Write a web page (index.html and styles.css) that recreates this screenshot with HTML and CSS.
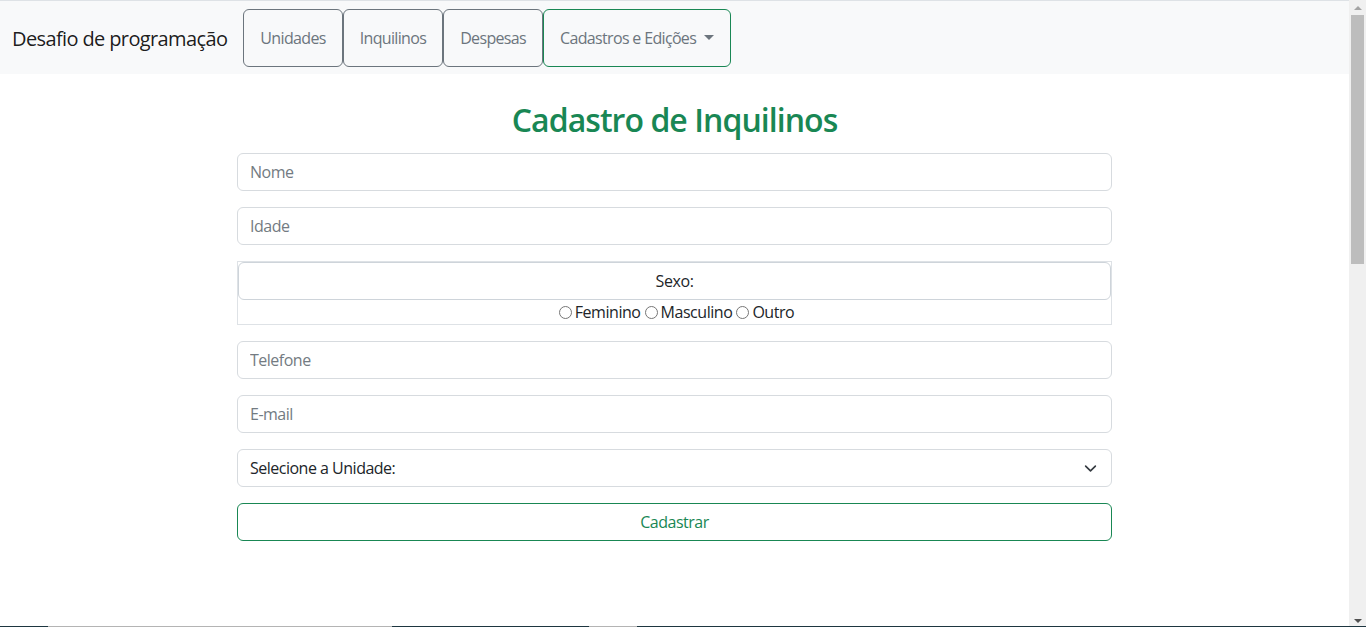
FILE: index.html
```html
<!DOCTYPE html>
<html lang="pt-BR">
<head>
<meta charset="utf-8">
<title>Cadastro de Inquilinos</title>
<link rel="stylesheet" href="styles.css">
</head>
<body>
<div class="page">
  <nav class="navbar">
    <span class="brand">Desafio de programação</span>
    <div class="nav-buttons">
      <button class="nav-btn">Unidades</button>
      <button class="nav-btn">Inquilinos</button>
      <button class="nav-btn">Despesas</button>
      <button class="nav-btn nav-btn-success">Cadastros e Edições<span class="caret"></span></button>
    </div>
  </nav>
  <main class="main">
    <h2 class="title">Cadastro de Inquilinos</h2>
    <form class="form">
      <input class="field" type="text" placeholder="Nome">
      <input class="field" type="text" placeholder="Idade">
      <div class="sexo-box">
        <div class="sexo-label">Sexo:</div>
        <div class="radios">
          <label class="radio"><span class="radio-circle"></span>Feminino</label>
          <label class="radio"><span class="radio-circle"></span>Masculino</label>
          <label class="radio"><span class="radio-circle"></span>Outro</label>
        </div>
      </div>
      <input class="field" type="text" placeholder="Telefone">
      <input class="field" type="text" placeholder="E-mail">
      <div class="field select">
        <span>Selecione a Unidade:</span>
        <svg class="chevron" width="13" height="13" viewBox="0 0 16 16"><path d="M2 5l6 6 6-6" fill="none" stroke="#343a40" stroke-width="2" stroke-linecap="round" stroke-linejoin="round"/></svg>
      </div>
      <button type="button" class="submit">Cadastrar</button>
    </form>
  </main>
</div>
<div class="scrollbar">
  <div class="sb-btn"><span class="arrow-up"></span></div>
  <div class="sb-thumb"></div>
  <div class="sb-track"></div>
  <div class="sb-btn"><span class="arrow-down"></span></div>
</div>
<div class="bottom-strip">
  <span class="seg dark s1"></span>
  <span class="seg grey s2"></span>
  <span class="seg dark s3"></span>
  <span class="seg grey s4"></span>
  <span class="seg dark s5"></span>
</div>
</body>
</html>
```
FILE: styles.css
```css
* { box-sizing: border-box; }
html, body { margin: 0; padding: 0; }
body {
  font-family: "Segoe UI", "Open Sans", "Noto Sans", sans-serif;
  font-size: 16px;
  line-height: 1.5;
  color: #212529;
  background: #fff;
  display: flex;
  height: 627px;
  overflow: hidden;
}
.page {
  flex: 1;
  min-width: 0;
  border-top: 1px solid #dee2e6;
}
.navbar {
  display: flex;
  align-items: center;
  background: #f8f9fa;
  padding: 0 12px;
  height: 73px;
}
.brand {
  font-size: 20px;
  color: rgba(0,0,0,.9);
  margin-right: 16px;
  padding-top: 3px;
  letter-spacing: -0.62px;
}
.nav-buttons { display: flex; }
.nav-btn {
  font-family: inherit;
  font-size: 16px;
  line-height: 23px;
  padding: 17px 16px 16px;
  background: transparent;
  color: #6c757d;
  border: 1px solid #6c757d;
  border-radius: 6px;
  letter-spacing: -0.66px;
  display: flex;
  align-items: center;
}
.nav-btn-success { border-color: #198754; }
.caret {
  display: inline-block;
  margin-left: 8px;
  width: 0; height: 0;
  border-top: 5px solid #6c757d;
  border-left: 5px solid transparent;
  border-right: 5px solid transparent;
  margin-top: -2px;
}
.main {
  display: flex;
  flex-direction: column;
  align-items: center;
}
.title {
  margin: 27px 0 14px;
  font-size: 32px;
  line-height: 38px;
  font-weight: 600;
  color: #198754;
  letter-spacing: -0.95px;
}
.form {
  width: 875px;
  display: flex;
  flex-direction: column;
  gap: 16px;
}
.field {
  display: block;
  width: 100%;
  height: 38px;
  padding: 6px 12px;
  font-family: inherit;
  font-size: 16px;
  line-height: 24px;
  color: #212529;
  background: #fff;
  border: 1px solid #d7dbdf;
  border-radius: 6px;
  letter-spacing: -0.5px;
  outline: none;
}
.field::placeholder { color: #737b82; opacity: 1; }
.sexo-box {
  border: 1px solid #dee2e6;
  display: flex;
  flex-direction: column;
}
.sexo-label {
  height: 38px;
  border: 1px solid #ced4da;
  border-radius: 6px;
  text-align: center;
  line-height: 36px;
  font-size: 16px;
  letter-spacing: -0.4px;
}
.radios {
  display: flex;
  justify-content: center;
  height: 24px;
  line-height: 24px;
  font-size: 16px;
  letter-spacing: -0.45px;
}
.radio { display: flex; align-items: center; }
.radio-circle {
  width: 13px; height: 13px;
  border: 1px solid #767676;
  border-radius: 50%;
  margin: 0 3px 0 4px;
  background: #fff;
}
.select {
  display: flex;
  align-items: center;
  justify-content: space-between;
  padding-right: 14px;
}
.chevron { width: 13px; height: 13px; }
.submit {
  height: 38px;
  font-family: inherit;
  font-size: 16px;
  line-height: 24px;
  color: #198754;
  background: transparent;
  border: 1px solid #198754;
  border-radius: 6px;
  letter-spacing: -0.5px;
}
.scrollbar {
  width: 17px;
  flex: none;
  background: #f0f0f0;
  display: flex;
  flex-direction: column;
  align-items: center;
}
.sb-btn {
  height: 15px;
  width: 17px;
  display: flex;
  align-items: center;
  justify-content: center;
  flex: none;
}
.sb-thumb {
  width: 13px;
  height: 249px;
  background: #bdbdbd;
  flex: none;
}
.sb-track { flex: 1; }
.arrow-up {
  width: 0; height: 0;
  border-left: 4px solid transparent;
  border-right: 4px solid transparent;
  border-bottom: 4px solid #a3a3a3;
}
.arrow-down {
  width: 0; height: 0;
  border-left: 4px solid transparent;
  border-right: 4px solid transparent;
  border-top: 4px solid #505050;
  margin-top: 2px;
}
.bottom-strip {
  position: fixed;
  left: 0; right: 0; bottom: 0;
  height: 1px;
  display: flex;
}
.seg { display: block; height: 1px; }
.dark { background: #1e3640; }
.grey { background: #b4b4b4; }
.s1 { width: 48px; }
.s2 { width: 344px; }
.s3 { width: 197px; }
.s4 { width: 48px; }
.s5 { flex: 1; }
```
